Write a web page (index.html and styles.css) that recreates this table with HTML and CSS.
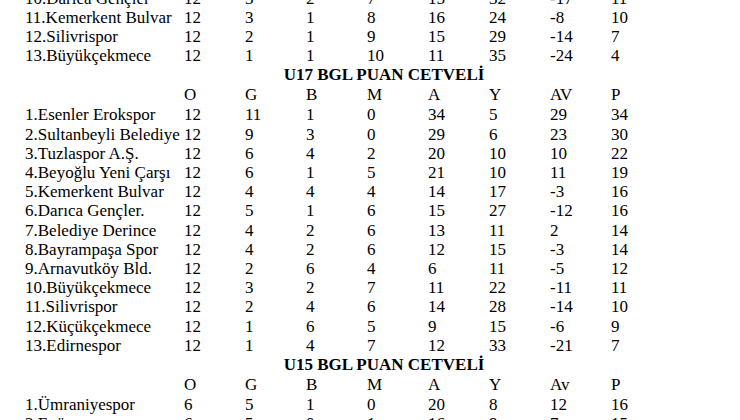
FILE: index.html
```html
<!DOCTYPE html>
<html lang="tr">
<head>
<meta charset="utf-8">
<title>BGL Puan Cetveli</title>
<link rel="stylesheet" href="styles.css">
</head>
<body>
<div class="page">
<table class="standings">
<colgroup>
<col class="c-name"><col class="c-num"><col class="c-num"><col class="c-num"><col class="c-num"><col class="c-num"><col class="c-num"><col class="c-num"><col class="c-last">
</colgroup>
<tbody>
<tr class="row"><td>10.Darıca Gençler</td><td>12</td><td>3</td><td>2</td><td>7</td><td>15</td><td>32</td><td>-17</td><td>11</td></tr>
<tr class="row"><td>11.Kemerkent Bulvar</td><td>12</td><td>3</td><td>1</td><td>8</td><td>16</td><td>24</td><td>-8</td><td>10</td></tr>
<tr class="row"><td>12.Silivrispor</td><td>12</td><td>2</td><td>1</td><td>9</td><td>15</td><td>29</td><td>-14</td><td>7</td></tr>
<tr class="row"><td>13.Büyükçekmece</td><td>12</td><td>1</td><td>1</td><td>10</td><td>11</td><td>35</td><td>-24</td><td>4</td></tr>

<tr class="title"><td colspan="9">U17 BGL PUAN CETVELİ</td></tr>
<tr class="head"><td></td><td>O</td><td>G</td><td>B</td><td>M</td><td>A</td><td>Y</td><td>AV</td><td>P</td></tr>
<tr class="row"><td>1.Esenler Erokspor</td><td>12</td><td>11</td><td>1</td><td>0</td><td>34</td><td>5</td><td>29</td><td>34</td></tr>
<tr class="row"><td>2.Sultanbeyli Belediye</td><td>12</td><td>9</td><td>3</td><td>0</td><td>29</td><td>6</td><td>23</td><td>30</td></tr>
<tr class="row"><td>3.Tuzlaspor A.Ş.</td><td>12</td><td>6</td><td>4</td><td>2</td><td>20</td><td>10</td><td>10</td><td>22</td></tr>
<tr class="row"><td>4.Beyoğlu Yeni Çarşı</td><td>12</td><td>6</td><td>1</td><td>5</td><td>21</td><td>10</td><td>11</td><td>19</td></tr>
<tr class="row"><td>5.Kemerkent Bulvar</td><td>12</td><td>4</td><td>4</td><td>4</td><td>14</td><td>17</td><td>-3</td><td>16</td></tr>
<tr class="row"><td>6.Darıca Gençler.</td><td>12</td><td>5</td><td>1</td><td>6</td><td>15</td><td>27</td><td>-12</td><td>16</td></tr>
<tr class="row"><td>7.Belediye Derince</td><td>12</td><td>4</td><td>2</td><td>6</td><td>13</td><td>11</td><td>2</td><td>14</td></tr>
<tr class="row"><td>8.Bayrampaşa Spor</td><td>12</td><td>4</td><td>2</td><td>6</td><td>12</td><td>15</td><td>-3</td><td>14</td></tr>
<tr class="row"><td>9.Arnavutköy Bld.</td><td>12</td><td>2</td><td>6</td><td>4</td><td>6</td><td>11</td><td>-5</td><td>12</td></tr>
<tr class="row"><td>10.Büyükçekmece</td><td>12</td><td>3</td><td>2</td><td>7</td><td>11</td><td>22</td><td>-11</td><td>11</td></tr>
<tr class="row"><td>11.Silivrispor</td><td>12</td><td>2</td><td>4</td><td>6</td><td>14</td><td>28</td><td>-14</td><td>10</td></tr>
<tr class="row"><td>12.Küçükçekmece</td><td>12</td><td>1</td><td>6</td><td>5</td><td>9</td><td>15</td><td>-6</td><td>9</td></tr>
<tr class="row"><td>13.Edirnespor</td><td>12</td><td>1</td><td>4</td><td>7</td><td>12</td><td>33</td><td>-21</td><td>7</td></tr>

<tr class="title"><td colspan="9">U15 BGL PUAN CETVELİ</td></tr>
<tr class="head"><td></td><td>O</td><td>G</td><td>B</td><td>M</td><td>A</td><td>Y</td><td>Av</td><td>P</td></tr>
<tr class="row"><td>1.Ümraniyespor</td><td>6</td><td>5</td><td>1</td><td>0</td><td>20</td><td>8</td><td>12</td><td>16</td></tr>
<tr class="row"><td>2.Eyüpspor</td><td>6</td><td>5</td><td>0</td><td>1</td><td>16</td><td>9</td><td>7</td><td>15</td></tr>
</tbody>
</table>
</div>
</body>
</html>
```

FILE: styles.css
```css
html, body {
  margin: 0;
  padding: 0;
  background: #ffffff;
  overflow: hidden;
}

.page {
  margin-top: -11.5px;
  padding-left: 22px;
}

.standings {
  width: 724px;
  table-layout: fixed;
  border-collapse: collapse;
  border-spacing: 0;
  font-family: "Liberation Serif", "Times New Roman", serif;
  font-size: 17px;
  color: #000000;
}

.c-name { width: 162px; }
.c-num { width: 61px; }
.c-last { width: auto; }

.standings td {
  padding: 0;
  white-space: nowrap;
  text-align: left;
  vertical-align: top;
}

.standings td:first-child {
  padding-left: 3px;
}

.row td {
  height: 19.2px;
  line-height: 19.2px;
}

.head td {
  height: 20px;
  line-height: 20px;
}

.title td {
  height: 20px;
  line-height: 20px;
  font-weight: bold;
  text-align: center;
}

.standings .title td:first-child {
  padding-left: 0;
}
```
